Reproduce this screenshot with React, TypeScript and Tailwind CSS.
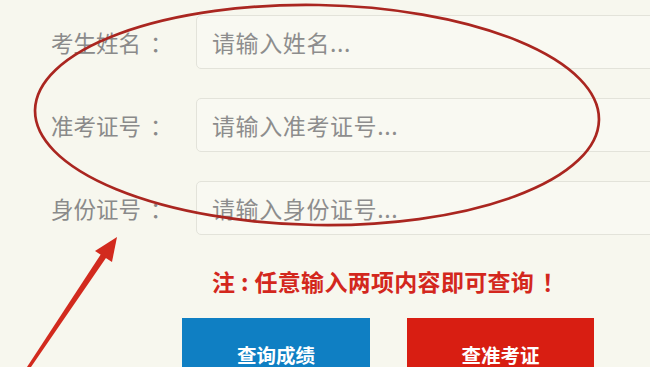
import React from "react";

const rows = [
  { label: "考生姓名", ph: "请输入姓名..." },
  { label: "准考证号", ph: "请输入准考证号..." },
  { label: "身份证号", ph: "请输入身份证号..." },
];

export default function App() {
  return (
    <div
      className="relative w-[650px] h-[367px] overflow-hidden bg-[#f7f7ee]"
      style={{ fontFamily: '"Noto Sans CJK SC", "Noto Sans", sans-serif' }}
    >
      <div className="flex flex-col pt-[15px]">
        <div className="flex flex-col gap-[29px]">
          {rows.map((r) => (
            <div key={r.label} className="flex items-center h-[54px]">
              <div className="w-[196px] shrink-0 pl-[51px] text-[22.5px] leading-none text-[#8a8a8a] flex items-center">
                <span>{r.label}</span>
                <span className="ml-[9px]">：</span>
              </div>
              <div className="h-full w-[500px] shrink-0 border border-[#e3e3da] rounded-[5px] bg-[#f9f9f2] flex items-center pl-[15px] text-[23px] leading-none text-[#8d8d8d] tracking-[0.6px]">
                {r.ph}
              </div>
            </div>
          ))}
        </div>
        <div className="mt-[35px] pl-[212px] text-[23px] leading-[22px] font-bold text-[#d3271d] flex items-center">
          <span>注</span>
          <span className="mx-[6px]">:</span>
          <span className="tracking-[0.3px]">任意输入两项内容即可查询</span>
          <span className="ml-[8px]">！</span>
        </div>
        <div className="mt-[26px] flex gap-[37px] pl-[182px]">
          <div className="w-[188px] h-[49px] pt-[27px] bg-[#0f7fc3] flex items-start justify-center text-white font-bold text-[19.5px] leading-none">
            查询成绩
          </div>
          <div className="w-[187px] h-[49px] pt-[27px] bg-[#d81e12] flex items-start justify-center text-white font-bold text-[19.5px] leading-none">
            查准考证
          </div>
        </div>
      </div>
      <svg
        className="absolute inset-0 pointer-events-none"
        width="650"
        height="367"
        viewBox="0 0 650 367"
      >
        <ellipse
          cx="317"
          cy="115"
          rx="282"
          ry="110"
          fill="none"
          stroke="#aa2620"
          strokeWidth="2.7"
          transform="rotate(1 317 115)"
        />
        <polygon points="27,367 31,367 108,255 103,251" fill="#d22a1e" />
        <polygon points="117,237 95,251 112,262" fill="#d22a1e" />
      </svg>
    </div>
  );
}
